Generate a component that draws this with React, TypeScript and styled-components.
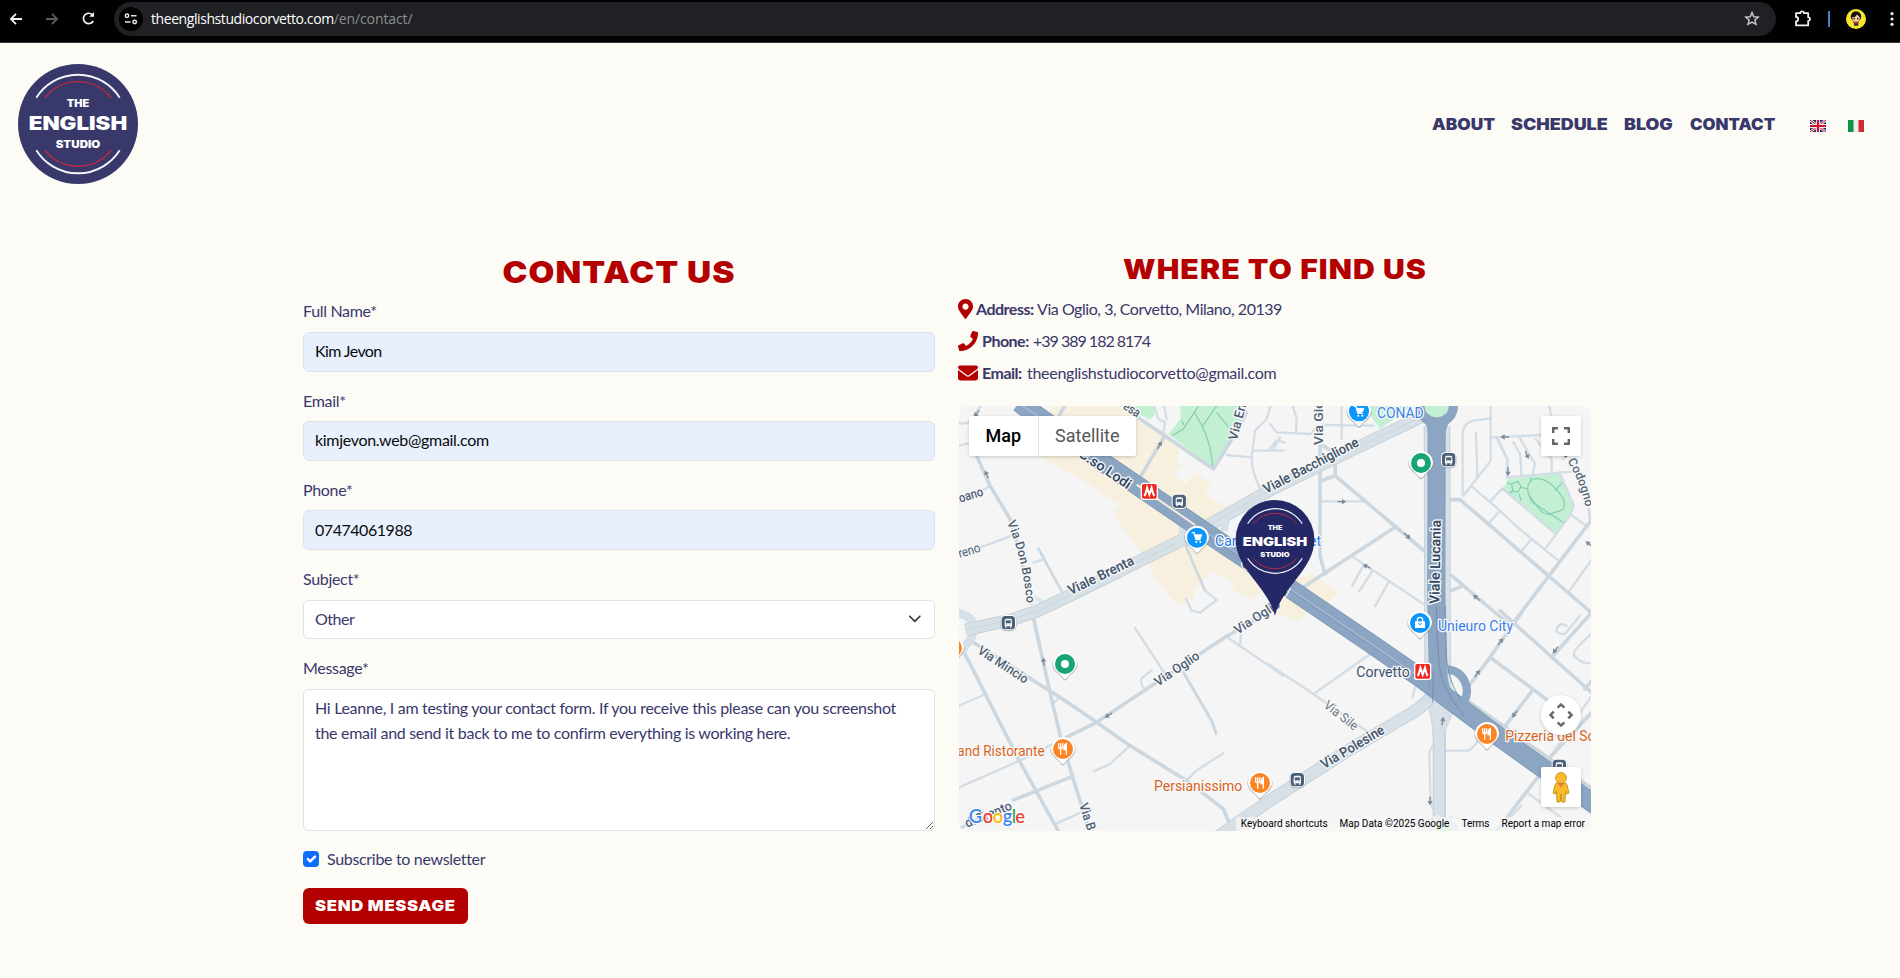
import React from 'react';
import styled, { createGlobalStyle } from 'styled-components';
import { FaMapMarkerAlt, FaPhone } from 'react-icons/fa';
import { FaEnvelope } from 'react-icons/fa6';

const NAVY = '#38386b';
const RED = '#b30000';
const CREAM = '#fdfbf6';

const GlobalStyle = createGlobalStyle`
  *, *::before, *::after { box-sizing: border-box; }
  html, body { margin: 0; padding: 0; background: ${CREAM}; overflow: hidden; }
  body {
    color: ${NAVY};
    font-family: Lato, 'Open Sans', sans-serif;
    font-size: 16px;
    line-height: 1.6;
    letter-spacing: -0.32px;
  }
`;

const Page = styled.div`
  width: 1900px;
  height: 978px;
  background: ${CREAM};
`;

/* ---------- browser toolbar ---------- */

const Toolbar = styled.div`
  display: flex;
  align-items: center;
  height: 43px;
  padding: 0 4px 5px 0;
  background: #010101;
  border-bottom: 1px solid #38343a;
`;

const ToolIcon = styled.svg<{ $ml: number; $dim?: boolean }>`
  flex: none;
  margin-left: ${(p) => p.$ml}px;
  color: ${(p) => (p.$dim ? '#5c5c5e' : '#f1f1f1')};
  overflow: visible;
`;

const AddressBar = styled.div`
  display: flex;
  align-items: center;
  width: 1662px;
  height: 34px;
  margin-left: 18px;
  padding: 0 16px 0 5px;
  border-radius: 17px;
  background: #202124;
`;

const SiteInfo = styled.div`
  display: flex;
  align-items: center;
  justify-content: center;
  width: 24px;
  height: 24px;
  border-radius: 50%;
  background: #000;
`;

const Url = styled.div`
  flex: 1;
  margin-left: 8px;
  color: #8d8f93;
  font: 14px/20px 'Open Sans', 'Noto Sans', sans-serif;
  letter-spacing: -0.1px;
`;

const Host = styled.span`
  color: #fff;
  letter-spacing: -0.42px;
`;

const Divider = styled.div`
  width: 2px;
  height: 16px;
  margin-left: 16px;
  background: #4b7fc0;
`;

/* ---------- site header ---------- */

const Header = styled.header`
  display: flex;
  align-items: center;
  justify-content: space-between;
  height: 162px;
  padding: 0 36px 0 18px;
`;

const Nav = styled.nav`
  display: flex;
  align-items: center;
`;

const NavLink = styled.a<{ $width: number; $stretch: number }>`
  width: ${(p) => p.$width}px;
  margin-right: 16px;
  padding-top: 2px;
  font: 900 15.5px/24px Inter, sans-serif;
  letter-spacing: 0;
  white-space: nowrap;
  transform: scaleX(${(p) => p.$stretch});
  transform-origin: left center;
`;

const Flags = styled.div`
  display: flex;
  gap: 22px;
  margin-left: 18px;
  padding-top: 4px;

  svg { display: block; }
`;

/* ---------- content ---------- */

const Main = styled.main`
  display: flex;
  gap: 24px;
  margin-left: 303px;
  padding-top: 47px;
`;

const Column = styled.section`
  width: 632px;
`;

const Title = styled.h1<{ $size: number; $stretch: number; $height: number; $line: number }>`
  height: ${(p) => p.$height}px;
  margin: 0;
  color: ${RED};
  font: 900 ${(p) => p.$size}px/${(p) => p.$line}px Inter, sans-serif;
  letter-spacing: 1px;
  text-align: center;
  transform: scaleX(${(p) => p.$stretch});
`;

const Field = styled.label`
  display: flex;
  flex-direction: column;
  gap: 8px;
  margin-bottom: 16px;
`;

const controlCss = `
  display: block;
  width: 100%;
  margin: 0;
  padding: 5px 11px 7px;
  border: 1px solid #dee2e6;
  border-radius: 6px;
  outline: none;
  font: 16px/25.6px Lato, 'Open Sans', sans-serif;
`;

const Input = styled.input<{ $track: number }>`
  ${controlCss}
  height: 39.6px;
  background: #e8f0fe;
  color: #0a0a0a;
  letter-spacing: ${(p) => p.$track}px;
`;

const SelectBox = styled.div`
  ${controlCss}
  display: flex;
  align-items: center;
  justify-content: space-between;
  height: 39.6px;
  background: #fff;
  letter-spacing: -0.5px;
`;

const TextArea = styled.textarea`
  ${controlCss}
  height: 142px;
  padding-right: 28px;
  background: #fff;
  color: ${NAVY};
  letter-spacing: -0.3px;
  resize: vertical;
`;

const CheckRow = styled.label`
  display: flex;
  align-items: center;
  gap: 8px;
  height: 26px;
  margin-top: -1px;
`;

const CheckMark = styled.span`
  display: flex;
  width: 16px;
  height: 16px;
  border-radius: 4px;
  background: #0d6efd;
`;

const SendButton = styled.button`
  display: flex;
  align-items: center;
  justify-content: center;
  width: 165px;
  height: 36px;
  margin-top: 16px;
  padding: 1px 0 0;
  border: 0;
  border-radius: 6px;
  background: ${RED};
  color: #fff;
  font: 900 15px/24px Inter, sans-serif;
  letter-spacing: 0.6px;

  span { white-space: nowrap; transform: scaleX(1.11); }
`;

const ContactLine = styled.div<{ $gap: number; $track: number }>`
  display: flex;
  align-items: center;
  height: 32px;
  margin-left: -1px;
  white-space: pre;
  letter-spacing: ${(p) => p.$track}px;

  svg { margin-right: ${(p) => p.$gap}px; color: ${RED}; flex: none; }
`;

const Key = styled.strong<{ $width: number }>`
  width: ${(p) => p.$width}px;
  letter-spacing: -0.5px;
`;

/* ---------- map ---------- */

const MapFrame = styled.div`
  position: relative;
  width: 632px;
  height: 425px;
  margin-top: 17px;
  border-radius: 8px;
  overflow: hidden;
  background: #f5f5f5;
`;

const MapCanvas = styled.svg`
  display: block;
  font-family: Roboto, sans-serif;
  letter-spacing: 0;
`;

const MapTypes = styled.div`
  position: absolute;
  left: 10px;
  top: 10px;
  display: flex;
  height: 40px;
  border-radius: 2px;
  background: #fff;
  box-shadow: 0 1px 4px -1px rgba(0, 0, 0, 0.3);
`;

const MapType = styled.div<{ $active?: boolean }>`
  padding: 0 16.5px;
  color: ${(p) => (p.$active ? '#000' : '#565656')};
  font: ${(p) => (p.$active ? 500 : 400)} 18px/40px Roboto, sans-serif;
  letter-spacing: 0;

  & + & { border-left: 1px solid #e4e4e4; }
`;

const MapControl = styled.div<{ $top: number; $round?: boolean }>`
  position: absolute;
  right: 10px;
  top: ${(p) => p.$top}px;
  display: flex;
  align-items: center;
  justify-content: center;
  width: 40px;
  height: 40px;
  border-radius: ${(p) => (p.$round ? '50%' : '2px')};
  background: #fff;
  box-shadow: 0 1px 4px -1px rgba(0, 0, 0, 0.3);
`;

const Attribution = styled.div`
  position: absolute;
  right: 0;
  bottom: 0;
  display: flex;
  gap: 12px;
  height: 14px;
  padding: 0 6px 0 5px;
  background: rgba(245, 245, 245, 0.75);
  color: #000;
  font: 10px/14px Roboto, sans-serif;
  letter-spacing: 0;
`;

const LogoMark = ({ cx, cy, r, drop = 0 }: { cx: number; cy: number; r: number; drop?: number }) => {
  const arc = (radius: number, y: number) => {
    const x = Math.sqrt(radius * radius - y * y);
    return `M${cx - x},${cy - y} A${radius},${radius} 0 0 1 ${cx + x},${cy - y} M${cx - x},${cy + y} A${radius},${radius} 0 0 0 ${cx + x},${cy + y}`;
  };
  const k = r / 60;
  return (
    <g fill="none">
      <path d={arc(49.3 * k, 26.3 * k)} stroke="#f4f4fb" strokeWidth={1.9 * k} />
      <path d={arc(42.4 * k, 26.3 * k)} stroke="#c02b3c" strokeWidth={1.4 * k} />
      <g fill="#fff" fontFamily="Inter, sans-serif" fontWeight="900" textAnchor="middle" letterSpacing="0">
        <text x={cx} y={cy - (17 - drop) * k} fontSize={9.8 * k} textLength={22.4 * k} lengthAdjust="spacingAndGlyphs">THE</text>
        <text x={cx} y={cy + (6.2 + drop) * k} fontSize={18.6 * k} textLength={98.6 * k} lengthAdjust="spacingAndGlyphs">ENGLISH</text>
        <text x={cx} y={cy + (23.7 + drop) * k} fontSize={10 * k} textLength={44.6 * k} lengthAdjust="spacingAndGlyphs">STUDIO</text>
      </g>
    </g>
  );
};

type LabelProps = { x: number; y: number; w: number; rot?: number; size?: number; fill?: string; weight?: number; children: string };

const MapLabel = ({ x, y, w, rot = 0, size = 39, fill = '#4f5f72', weight = 500, children }: LabelProps) => (
  <text
    transform={`translate(${x} ${y}) rotate(${rot})`}
    fontSize={size}
    fontWeight={weight}
    fill={fill}
    textLength={w}
    lengthAdjust="spacingAndGlyphs"
    stroke="#f7f8f9"
    strokeWidth="8"
    strokeLinejoin="round"
    paintOrder="stroke"
  >
    {children}
  </text>
);

const Pin = ({ x, y, fill, children }: { x: number; y: number; fill: string; children?: React.ReactNode }) => (
  <g transform={`translate(${x} ${y})`}>
    <path d="M-38,4 A38,38 0 1 1 38,4 C35,24 14,32 8,43 Q0,56 -8,43 C-14,32 -35,24 -38,4Z" fill="#8b9096" opacity="0.55" />
    <path d="M-36,0 A36,36 0 1 1 36,0 C34,20 14,28 7,40 Q0,50 -7,40 C-14,28 -34,20 -36,0Z" fill="#fff" />
    <circle r="30" fill={fill} />
    {children}
  </g>
);

const Cart = () => (
  <g fill="none" stroke="#fff" strokeWidth="4">
    <path d="M-16,-15 h7 l6,21 h14" />
    <path d="M-8,-9 h23 l-5,12 h-14z" fill="#fff" strokeWidth="2" />
    <circle cx="-2" cy="13" r="3" fill="#fff" stroke="none" />
    <circle cx="10" cy="13" r="3" fill="#fff" stroke="none" />
  </g>
);

const Fork = () => (
  <g fill="none" stroke="#fff" strokeWidth="4">
    <path d="M-13,-17 v10 q0,6 6,6 q6,0 6,-6 v-10 M-7,-17 V17" />
    <path d="M10,17 V-16 q-8,4 -7,18 h7" fill="#fff" />
  </g>
);

const Metro = ({ x, y }: { x: number; y: number }) => (
  <g transform={`translate(${x} ${y})`}>
    <rect x="-26" y="-26" width="52" height="52" rx="8" fill="#fff" />
    <rect x="-22" y="-22" width="44" height="44" rx="5" fill="#f0281e" />
    <path d="M-15,14 C-10,8 -9,-4 -7,-11 L0,10 L7,-11 C9,-4 10,8 15,14" fill="none" stroke="#fff" strokeWidth="6" />
  </g>
);

const Transit = ({ x, y }: { x: number; y: number }) => (
  <g transform={`translate(${x} ${y})`}>
    <rect x="-24" y="-22" width="48" height="48" rx="15" fill="#8b9096" opacity="0.6" />
    <rect x="-23" y="-23" width="46" height="46" rx="14" fill="#fff" />
    <rect x="-20" y="-20" width="40" height="40" rx="11" fill="#4b6079" />
    <path d="M-11,11 V-6 q0,-6 6,-6 h10 q6,0 6,6 V11z" fill="#fff" />
    <path d="M-7,-6 h14 v7 h-14z M-6,5 h3 M3,5 h3" fill="#4b6079" stroke="#4b6079" strokeWidth="2" />
    <path d="M-7,11 v4 M7,11 v4" stroke="#fff" strokeWidth="4" />
  </g>
);

const Arrow = ({ x, y, rot }: { x: number; y: number; rot: number }) => (
  <path transform={`translate(${x} ${y}) rotate(${rot})`} d="M-13,-2 H0 V-8 L13,0 L0,8 V2 H-13Z" fill="#7f8a98" />
);

const ROAD = { fill: 'none', stroke: '#ccd7df', strokeWidth: 11, strokeLinejoin: 'round', strokeLinecap: 'round' } as const;
const LANE = { fill: 'none', stroke: '#d3dde6', strokeWidth: 7, strokeLinejoin: 'round', strokeLinecap: 'round' } as const;
const TRAIL = { fill: 'none', stroke: '#84ccb2', strokeWidth: 3.5 } as const;

const LODI = 'M180,-10 L443,176 L748,384 L1000,553 L1233,711 L1384,815 L1500,902 L1633,1002 L1745,1082 L1920,1205';
const LUCANIA = 'M1433,40 L1432,560 Q1434,700 1438,845';
const LUCANIA_SIDE = 'M1434,60 L1436,860 L1441,1000 L1441,1290';
const BRENTA = 'M20,672 L80,658 L150,644 L235,615 L350,560 L690,392 L933,252 L1133,154 L1400,26';
const POLESINE = 'M1412,878 Q1380,912 1333,936 L1170,1032 L933,1183 L780,1290';

const StreetMap = () => (
  <MapCanvas width="632" height="425" viewBox="0 0 1896 1275">
    <rect width="1896" height="1275" fill="#f5f5f5" />

    {/* north-west */}
    <g transform="translate(-27 -21)">
      <path fill="#f8f0de" d="M230,150 L450,275 L455,288 L510,315 L490,345 L610,515 L600,520 L685,620 L735,595 L730,575 L785,515 L850,550 L845,570 L905,600 L960,560 L870,440 L780,360 L835,325 L765,288 L785,255 L735,222 L705,255 L668,222 L695,205 L680,185 L690,155 L655,105 L600,75 L500,21 L310,21Z" />
      <path fill="#c3f0d3" d="M690,10 L890,10 L870,80 L832,140 L790,208 L655,105 L692,60Z M560,10 L610,10 L615,45 L600,62 L550,38Z" />
      <path {...TRAIL} d="M745,21 L733,40 L700,90 L665,110 M733,40 L757,82 L800,21 M757,82 Q785,140 788,205 M800,40 L840,90 M695,66 L702,78" />
      <path {...LANE} d="M27,140 L60,132 M27,310 L120,262 M27,470 L185,410 M250,490 L280,482 M27,72 Q60,80 75,45 L100,10 M610,10 L625,60 L645,70 L640,100 M640,10 L650,60 M830,168 L905,175 L915,95 L950,60 L965,10 M905,172 Q905,220 930,268 M915,155 L1000,155 M968,155 L990,115 M708,598 L725,635 L750,641 L800,603 L765,575" />
      <path {...ROAD} strokeWidth={8} d="M265,448 L335,577 M705,435 L765,575" />
      <path {...ROAD} d="M75,160 L120,260 L180,360 L200,430 L245,610 M350,10 L318,66 M570,235 L645,110 M535,35 L790,210 L840,130 L890,40" />
      <path fill="none" stroke="#e1e7ec" strokeWidth="12" d="M240,618 L258,595 L285,618" />
    </g>

    {/* north-east */}
    <g transform="translate(933 -21)">
      <path fill="#f8f0de" d="M55,548 L125,525 L208,580 L163,620 L150,612 L80,665 L10,640Z" />
      <path fill="#c3f0d3" d="M295,10 L440,10 L330,90 L305,55Z M715,240 L868,222 L910,320 L900,350 L855,408 L697,272Z" />
      <path {...TRAIL} d="M725,255 l18,-8 l10,15 l-8,16 l-16,0z M752,265 L775,270 M775,285 Q768,250 790,240 Q810,236 828,246 Q858,262 880,300 Q890,325 872,335 L835,346 Q815,342 808,330Z M778,295 L778,285 M780,295 Q782,310 800,318 L882,372 M712,250 L725,258 M715,285 L728,275 M748,285 L753,305 M780,235 L785,248 M855,275 L878,250" />
      <path {...LANE} d="M0,75 L20,100 L120,105 L150,80 M0,150 L18,125 L45,130 M65,10 L80,60 L78,100 M155,78 L310,80 M215,10 L215,120 M155,307 L280,307 M250,475 L465,618 M280,500 L247,560 M308,515 L267,577 M355,550 L315,622" />
      <path {...LANE} d="M662,10 L662,185 L580,290 M662,58 L610,65 Q578,72 578,110 L578,285 M618,102 L622,235 M668,115 L813,108 M730,130 L750,165 L755,228 M797,120 L845,180 L845,225 M745,110 L795,195 L788,225 M712,235 L905,218 M868,220 L912,320 L900,350 L825,450 M605,262 L690,335 L735,378 L785,420 L865,485 M660,308 L697,268 M697,268 L860,405 M690,335 L655,375 M785,420 L755,455 M970,475 L895,580 M905,348 L945,378 M835,10 L860,120 L880,180" />
      <path {...LANE} strokeWidth={9} d="M680,115 L712,180 L712,235 M955,320 L962,370" />
      <path {...ROAD} d="M150,140 L150,470 L165,525 M150,247 L195,230 L470,462 M195,230 L197,165 L160,140 M375,385 L165,522 L60,590 M540,302 L570,302 L980,655 M970,355 L735,665 M545,530 L580,560 L710,670 M545,575 L580,560" />
    </g>

    {/* south-west */}
    <g transform="translate(-27 624)">
      <path {...LANE} d="M27,275 L100,243 M555,42 L645,180 M585,228 Q568,205 575,193 L605,168 M825,65 L1000,185 M870,95 L873,60 M430,472 L480,450 L540,395 M710,500 L738,470 L820,418 M320,628 L400,592 M312,265 L330,250 M27,520 L205,442 L345,372" />
      <path {...ROAD} strokeWidth={9} d="M700,175 L785,320 L798,358 M27,645 L110,600" />
      <path {...ROAD} d="M250,10 L300,235 L332,370 L368,490 L425,670 M70,85 L330,250 L440,325 L540,395 L710,500 L820,585 L835,620 M40,110 L205,435 L330,660 M345,372 L440,325 L590,225 L830,67 L960,-10 M190,558 L368,487" />
      <path fill="none" stroke="#d7dfe7" strokeWidth="26" strokeLinecap="round" d="M10,-5 Q55,0 68,25 Q75,70 50,90 L35,110" />
    </g>

    {/* south-east */}
    <g transform="translate(933 624)">
      <path {...LANE} d="M-5,150 L130,240 L190,283 L290,350 M130,240 L297,123 M475,95 L478,220 M428,250 L435,220 M487,395 L478,415 L482,570 L492,590 M525,410 L595,410 Q615,400 628,370 M972,235 L840,430 M770,535 L875,612 M885,60 Q850,60 862,40 Q872,25 890,35 M885,60 L930,5 M970,55 Q905,110 912,125 Q940,155 970,145 M755,575 L675,655 M540,610 L620,625 L670,651" />
      <path {...ROAD} d="M755,-5 L660,130 L590,225 M660,130 L835,260 M785,232 L695,350 M690,-10 L975,245 M845,130 L970,-10 M945,225 L970,195 M803,490 L680,651 M975,285 L835,435" />
      <path d="M595,265 L970,530" stroke="#c9d5dc" strokeWidth="16" />
    </g>

    {/* main avenues */}
    <g fill="none" strokeLinejoin="round">
      <path d={LUCANIA_SIDE} stroke="#c5d1da" strokeWidth="40" />
      <path d="M1434,60 L1436,850" stroke="#c5d1da" strokeWidth="80" />
      <path d="M1434,60 L1436,850" stroke="#d7e0e7" strokeWidth="74" />
      <path d="M1394,830 L1478,830 L1482,920 L1456,980 L1458,1290 L1424,1290 L1424,980 L1414,930Z" fill="#d7e0e7" stroke="#c5d1da" strokeWidth="2" />
      <path d={BRENTA} stroke="#bdcad4" strokeWidth="38" />
      <path d={BRENTA} stroke="#d7e0e7" strokeWidth="34" />
      <path d={BRENTA} stroke="#c5d1da" strokeWidth="2" />
      <path d={POLESINE} stroke="#bdcad4" strokeWidth="38" />
      <path d={POLESINE} stroke="#d7e0e7" strokeWidth="34" />
      <path d="M670,410 L670,365 L715,355 M800,345 L795,375" stroke="#d7e0e7" strokeWidth="22" />
      <path d={LODI} stroke="#7b96b6" strokeWidth="58" />
      <path d={LODI} stroke="#8ba5c2" strokeWidth="54" />
      <path d="M533,236 L708,357" stroke="#f8f0de" strokeWidth="6" />
      <path d="M190,0 L240,32 M720,364 L748,384 L1000,553 L1233,711 L1384,815" stroke="#b7c6d8" strokeWidth="3" />
      <path d="M748,390 L1000,559 L1233,717 L1384,822" stroke="#7893b3" strokeWidth="2" />
      <path d="M1466,790 Q1510,795 1522,840 Q1530,870 1505,905" stroke="#8ba5c2" strokeWidth="25" />
      <path d={LUCANIA} stroke="#7b96b6" strokeWidth="54" />
      <path d={LUCANIA} stroke="#8ba5c2" strokeWidth="50" />
      <path d="M1453,800 Q1455,870 1515,920" stroke="#8ba5c2" strokeWidth="24" />
      <path d="M1432,600 L1434,680 L1440,770 Q1442,840 1515,930 M1458,600 L1463,760 Q1470,830 1505,880 M1421,890 L1423,800" stroke="#6f8cad" strokeWidth="2.5" />
      <circle cx="1433" cy="0" r="50" stroke="#8ba5c2" strokeWidth="28" fill="#c3f0d3" />
      <path d="M1383,35 Q1410,55 1408,100 L1458,100 Q1458,50 1490,30 L1460,25 L1405,25Z" fill="#8ba5c2" />
      <circle cx="1433" cy="-2" r="36" fill="#c3f0d3" />
      <circle cx="1455" cy="1280" r="38" fill="#c3f0d3" stroke="#d7e0e7" strokeWidth="16" />
    </g>

    <Arrow x={83} y={205} rot={-115} />
    <Arrow x={602} y={117} rot={-62} />
    <Arrow x={53} y={23} rot={130} />
    <Arrow x={1149} y={287} rot={0} />
    <Arrow x={1345} y={390} rot={42} />
    <Arrow x={1223} y={481} rot={205} />
    <Arrow x={1637} y={93} rot={180} />
    <Arrow x={1647} y={197} rot={90} />
    <Arrow x={1704} y={147} rot={68} />
    <Arrow x={1552} y={575} rot={222} />
    <Arrow x={1890} y={414} rot={220} />
    <Arrow x={254} y={767} rot={-98} />
    <Arrow x={448} y={928} rot={150} />
    <Arrow x={1625} y={706} rot={-52} />
    <Arrow x={1555} y={802} rot={-52} />
    <Arrow x={1789} y={732} rot={128} />
    <Arrow x={1667} y={924} rot={128} />
    <Arrow x={1451} y={945} rot={-78} />
    <Arrow x={1413} y={1185} rot={90} />

    {/* street names */}
    <MapLabel x={490} y={7} w={52} rot={33}>esa</MapLabel>
    <MapLabel x={356} y={150} w={180} rot={34} size={42} weight={600} fill="#34485f">C.so Lodi</MapLabel>
    <MapLabel x={4} y={290} w={74} rot={-17}>oano</MapLabel>
    <MapLabel x={2} y={456} w={68} rot={-17} weight={400}>reno</MapLabel>
    <text fontSize="37" fontWeight="500" fill="#4f5f72" stroke="#f7f8f9" strokeWidth="8" paintOrder="stroke" strokeLinejoin="round">
      <textPath href="#donBosco" textLength="250">Via Don Bosco</textPath>
    </text>
    <path id="donBosco" d="M144,350 Q190,450 204,600" fill="none" />
    <MapLabel x={335} y={568} w={215} rot={-26} size={42} weight={600} fill="#46586d">Viale Brenta</MapLabel>
    <MapLabel x={833} y={105} w={112} rot={-75}>Via En</MapLabel>
    <MapLabel x={1092} y={117} w={132} rot={-90}>Via Gio</MapLabel>
    <MapLabel x={922} y={264} w={316} rot={-27.5} size={42} weight={600} fill="#46586d">Viale Bacchiglione</MapLabel>
    <MapLabel x={1441} y={594} w={252} rot={-89} size={42} weight={600} fill="#34485f">Viale Lucania</MapLabel>
    <text fontSize="37" fontWeight="500" fill="#5b6979" stroke="#f7f8f9" strokeWidth="8" paintOrder="stroke" strokeLinejoin="round">
      <textPath href="#codogno" textLength="178">a Codogno</textPath>
    </text>
    <path id="codogno" d="M1808,142 Q1862,210 1882,315" fill="none" />
    <MapLabel x={53} y={740} w={172} rot={33}>Via Mincio</MapLabel>
    <MapLabel x={597} y={842} w={154} rot={-34}>Via Oglio</MapLabel>
    <MapLabel x={836} y={686} w={155} rot={-33}>Via Oglio</MapLabel>
    <MapLabel x={975} y={575} w={34} rot={-60} size={42} weight={600} fill="#34485f">di</MapLabel>
    <MapLabel x={844} y={478} w={30} rot={34} size={42} weight={600} fill="#34485f">C</MapLabel>
    <MapLabel x={24} y={1265} w={148} rot={-22}>di Trento</MapLabel>
    <MapLabel x={360} y={1196} w={84} rot={72}>Via B</MapLabel>
    <MapLabel x={1092} y={902} w={118} rot={38} weight={400} fill="#6a7480">Via Sile</MapLabel>
    <MapLabel x={1096} y={1090} w={214} rot={-31} size={42} weight={600} fill="#46586d">Via Polesine</MapLabel>
    <MapLabel x={1192} y={812} w={160} size={42} weight={400} fill="#3d5168">Corvetto</MapLabel>
    <MapLabel x={1356} y={1275} w={95} rot={-15} weight={400} fill="#9aa3ad">Piazza</MapLabel>

    {/* places */}
    <MapLabel x={768} y={419} w={318} size={42} weight={400} fill="#2e7be6">Carrefour Market</MapLabel>
    <MapLabel x={1254} y={36} w={140} size={42} weight={400} fill="#3d82e8">CONAD</MapLabel>
    <MapLabel x={1437} y={675} w={225} size={42} weight={400} fill="#3d82e8">Unieuro City</MapLabel>
    <MapLabel x={-5} y={1050} w={262} size={42} weight={400} fill="#d9651b">and Ristorante</MapLabel>
    <MapLabel x={585} y={1155} w={265} size={42} weight={400} fill="#d9651b">Persianissimo</MapLabel>
    <MapLabel x={1639} y={1005} w={302} size={42} weight={400} fill="#d9651b">Pizzeria del Sole</MapLabel>

    <Transit x={661} y={286} />
    <Transit x={1469} y={161} />
    <Transit x={148} y={650} />
    <Transit x={1015} y={1121} />
    <Transit x={1801} y={1081} />
    <Metro x={571} y={256} />
    <Metro x={1391} y={796} />
    <Pin x={714} y={395} fill="#0b96fb"><Cart /></Pin>
    <Pin x={1200} y={16} fill="#0b96fb"><Cart /></Pin>
    <Pin x={1386} y={171} fill="#17a673"><circle r="12" fill="#fff" /></Pin>
    <Pin x={318} y={774} fill="#17a673"><circle r="12" fill="#fff" /></Pin>
    <Pin x={1383} y={651} fill="#0b96fb">
      <path d="M-15,-5 h30 v20 h-30z" fill="#fff" />
      <path d="M-8,-4 v-5 a8,8 0 0 1 16,0 v5" fill="none" stroke="#fff" strokeWidth="4" />
      <path d="M-5,1 q5,8 10,0" fill="none" stroke="#0b96fb" strokeWidth="3" />
    </Pin>
    <Pin x={312} y={1029} fill="#fb8425"><Fork /></Pin>
    <Pin x={903} y={1131} fill="#fb8425"><Fork /></Pin>
    <Pin x={1584} y={984} fill="#fb8425"><Fork /></Pin>
    <Pin x={-21} y={726} fill="#fb8425" />

    {/* studio marker */}
    <path d="M948,629 C925,540 830,490 830,400 A118,118 0 0 1 1066,400 C1066,490 971,540 948,629Z" fill="#252866" />
    <LogoMark cx={948} cy={405} r={118} drop={0.8} />

    <text y="1252" fontFamily="Lato, sans-serif" fontSize="55" fontWeight="600" stroke="#fff" strokeWidth="6" paintOrder="stroke">
      <tspan x="29" fill="#4285f4">G</tspan>
      <tspan x="71" fill="#ea4335">o</tspan>
      <tspan x="101" fill="#fbbc04">o</tspan>
      <tspan x="131" fill="#4285f4">g</tspan>
      <tspan x="158" fill="#34a853">l</tspan>
      <tspan x="169" fill="#ea4335">e</tspan>
    </text>
  </MapCanvas>
);

const nav = [
  { label: 'ABOUT', width: 63, stretch: 1.115 },
  { label: 'SCHEDULE', width: 97, stretch: 1.155 },
  { label: 'BLOG', width: 50, stretch: 1.15 },
  { label: 'CONTACT', width: 86, stretch: 1.085 },
];

const fields = [
  { label: 'Full Name*', value: 'Kim Jevon', track: -0.6 },
  { label: 'Email*', value: 'kimjevon.web@gmail.com', track: -0.3 },
  { label: 'Phone*', value: '07474061988', track: -0.46 },
];

export default function App() {
  return (
    <Page>
      <GlobalStyle />
      <Toolbar>
        <ToolIcon $ml={10} width="12" height="12" viewBox="0 0 12 12">
          <path d="M12,6 H1 M6,0.8 L0.9,6 L6,11.2" fill="none" stroke="currentColor" strokeWidth="1.8" />
        </ToolIcon>
        <ToolIcon $ml={24} $dim width="12" height="12" viewBox="0 0 12 12">
          <path d="M0,6 H11 M6,0.8 L11.1,6 L6,11.2" fill="none" stroke="currentColor" strokeWidth="1.8" />
        </ToolIcon>
        <ToolIcon $ml={24} width="14" height="13" viewBox="0 0 14 13">
          <path d="M11.2,9 A5.2,5.2 0 1 1 10.4,2.8 L11.6,4" fill="none" stroke="currentColor" strokeWidth="1.7" />
          <path d="M12,0 V4.8 H7.2z" fill="currentColor" />
        </ToolIcon>
        <AddressBar>
          <SiteInfo>
            <svg width="14" height="12" viewBox="0 0 14 12" fill="none" stroke="#e8e8e8" strokeWidth="1.5">
              <circle cx="3" cy="2.8" r="1.7" />
              <path d="M7,2.8 H12.5 M1,9 H6.5" />
              <circle cx="10.7" cy="9" r="1.7" />
            </svg>
          </SiteInfo>
          <Url><Host>theenglishstudiocorvetto.com</Host>/en/contact/</Url>
          <svg width="16" height="15" viewBox="0 0 16 15" fill="none" stroke="#c4c6c9" strokeWidth="1.5">
            <path d="M8,1.6 L9.8,5.7 L14.2,6.1 L10.9,9 L11.9,13.3 L8,11 L4.1,13.3 L5.1,9 L1.8,6.1 L6.2,5.7Z" />
          </svg>
        </AddressBar>
        <ToolIcon $ml={19} width="17" height="17" viewBox="0 0 17 17">
          <path d="M1,3.2 H5.3 A1.8,1.8 0 0 1 8.9,3.2 H13.2 V7.4 A1.8,1.8 0 0 1 13.2,11 V15.4 H1 V11.4 A2.2,2.2 0 0 0 1,7Z" fill="none" stroke="currentColor" strokeWidth="1.8" strokeLinejoin="round" />
        </ToolIcon>
        <Divider />
        <ToolIcon $ml={16} width="20" height="20" viewBox="0 0 20 20">
          <circle cx="10" cy="10" r="10" fill="#f5e52c" />
          <circle cx="10" cy="7.4" r="5.2" fill="#17130f" />
          <path d="M6,8.4 L9,8 L11,5.6 L14,8.4 Q13.5,12.4 9.8,12.6 Q6.5,12 6,8.4Z" fill="#f3cdb2" />
          <circle cx="8.2" cy="9.6" r="0.8" fill="#17130f" />
          <circle cx="11.8" cy="9.6" r="0.8" fill="#17130f" />
          <path d="M8,13 h4.2 v3.8 h-4.2z" fill="#22324a" />
          <path d="M7,12.8 h6 v1.4 h-6z" fill="#d8432f" />
        </ToolIcon>
        <ToolIcon $ml={24} width="4" height="14" viewBox="0 0 4 14">
          <g fill="currentColor"><circle cx="2" cy="1.7" r="1.6" /><circle cx="2" cy="7" r="1.6" /><circle cx="2" cy="12.3" r="1.6" /></g>
        </ToolIcon>
      </Toolbar>

      <Header>
        <svg width="120" height="120" viewBox="0 0 120 120">
          <circle cx="60" cy="60" r="60" fill={NAVY} />
          <LogoMark cx={60} cy={60} r={60} />
        </svg>
        <Nav>
          {nav.map((n) => (
            <NavLink key={n.label} $width={n.width} $stretch={n.stretch}>{n.label}</NavLink>
          ))}
          <Flags>
            <svg width="16" height="12" viewBox="0 0 16 12">
              <rect width="16" height="12" fill="#1f2f6f" />
              <path d="M0,0 L16,12 M16,0 L0,12" stroke="#eee" strokeWidth="2.6" />
              <path d="M0,0 L16,12 M16,0 L0,12" stroke="#c8102e" strokeWidth="1" />
              <path d="M8,0 V12 M0,6 H16" stroke="#eee" strokeWidth="4" />
              <path d="M8,0 V12 M0,6 H16" stroke="#d0142f" strokeWidth="2.2" />
            </svg>
            <svg width="16" height="12" viewBox="0 0 16 12">
              <rect width="16" height="12" fill="#ececec" />
              <rect width="5.5" height="12" fill="#0a9247" />
              <rect x="10.5" width="5.5" height="12" fill="#ce2b37" />
            </svg>
          </Flags>
        </Nav>
      </Header>

      <Main>
        <Column>
          <Title $size={30.5} $stretch={1.095} $height={46.4} $line={40}>CONTACT US</Title>
          {fields.map((f) => (
            <Field key={f.label}>
              <span>{f.label}</span>
              <Input $track={f.track} defaultValue={f.value} />
            </Field>
          ))}
          <Field as="div">
            <span>Subject*</span>
            <SelectBox>
              Other
              <svg width="16" height="16" viewBox="0 0 16 16" fill="none" stroke="#343a40" strokeWidth="2" strokeLinecap="round" strokeLinejoin="round">
                <path d="m2 5 6 6 6-6" transform="translate(1 2) scale(0.85)" />
              </svg>
            </SelectBox>
          </Field>
          <Field>
            <span>Message*</span>
            <TextArea defaultValue="Hi Leanne, I am testing your contact form. If you receive this please can you screenshot the email and send it back to me to confirm everything is working here." />
          </Field>
          <CheckRow>
            <CheckMark>
              <svg width="16" height="16" viewBox="0 0 20 20" fill="none" stroke="#fff" strokeWidth="3" strokeLinecap="round" strokeLinejoin="round">
                <path d="m6 10 3 3 6-6" />
              </svg>
            </CheckMark>
            <span>Subscribe to newsletter</span>
          </CheckRow>
          <SendButton><span>SEND MESSAGE</span></SendButton>
        </Column>

        <Column>
          <Title $size={27} $stretch={1.115} $height={41} $line={36}>WHERE TO FIND US</Title>
          <ContactLine $gap={3} $track={-0.45}>
            <FaMapMarkerAlt style={{ width: 15, height: 20 }} />
            <Key $width={61}>Address:</Key>Via Oglio, 3, Corvetto, Milano, 20139
          </ContactLine>
          <ContactLine $gap={4} $track={-1}>
            <FaPhone size={20} />
            <Key $width={51}>Phone:</Key>+39 389 182 8174
          </ContactLine>
          <ContactLine $gap={4} $track={-0.28}>
            <FaEnvelope size={20} />
            <Key $width={45}>Email:</Key>theenglishstudiocorvetto@gmail.com
          </ContactLine>
          <MapFrame>
            <StreetMap />
            <MapTypes>
              <MapType $active>Map</MapType>
              <MapType>Satellite</MapType>
            </MapTypes>
            <MapControl $top={10}>
              <svg width="18" height="18" viewBox="0 0 18 18" fill="none" stroke="#666" strokeWidth="2.4">
                <path d="M1.2,6 V1.2 H6 M12,1.2 H16.8 V6 M16.8,12 V16.8 H12 M6,16.8 H1.2 V12" />
              </svg>
            </MapControl>
            <MapControl $top={289} $round>
              <svg width="24" height="24" viewBox="0 0 24 24" fill="none" stroke="#666" strokeWidth="2.4">
                <path d="M8.6,4.7 L12,1.5 L15.4,4.7 M8.6,19.3 L12,22.5 L15.4,19.3 M4.7,8.6 L1.5,12 L4.7,15.4 M19.3,8.6 L22.5,12 L19.3,15.4" />
              </svg>
            </MapControl>
            <MapControl $top={361}>
              <svg width="18" height="31" viewBox="0 0 18 31" stroke="#b8860b" strokeWidth="0.8">
                <path d="M5,11 H13 Q14.5,11 15,13 L17,21 L14.5,22 L13.5,19 L13,30 H9.8 L9,22 L8.2,30 H5 L4.5,19 L3.5,22 L1,21 L3,13 Q3.5,11 5,11Z" fill="#fcbb2b" />
                <path d="M5.5,11 H12.5 L9,16Z" fill="#e8833a" stroke="none" />
                <circle cx="9" cy="6" r="5.4" fill="#fcbb2b" />
              </svg>
            </MapControl>
            <Attribution>
              <span>Keyboard shortcuts</span>
              <span>Map Data ©2025 Google</span>
              <span>Terms</span>
              <span>Report a map error</span>
            </Attribution>
          </MapFrame>
        </Column>
      </Main>
    </Page>
  );
}
